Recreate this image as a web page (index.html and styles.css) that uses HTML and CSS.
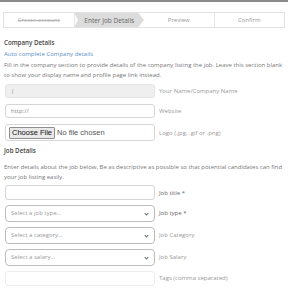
FILE: index.html
```html
<!DOCTYPE html>
<html lang="en">
<head>
  <meta charset="UTF-8" />
  <title>Submit Job</title>
  <link rel="stylesheet" href="styles.css">
</head>
<body>

<div class="topbar"></div>

<ul class="steps">
  <li class="step done">Create account</li>
  <li class="step active">Enter Job Details</li>
  <li class="step">Preview</li>
  <li class="step">Confirm</li>
</ul>

<div class="section company">
  <h3>Company Details</h3>
  <a class="auto-link" href="#">Auto complete Company details</a>
  <p class="hint">Fill in the company section to provide details of the company listing the job. Leave this section blank to show your display name and profile page link instead.</p>

  <div class="row">
    <input type="text" class="field disabled" value="|">
    <label>Your Name/Company Name</label>
  </div>
  <div class="row">
    <input type="text" class="field" value="http://">
    <label>Website</label>
  </div>
  <div class="row">
    <div class="field file-field">
      <span class="file-btn">Choose File</span>
      <span class="file-none">No file chosen</span>
    </div>
    <label>Logo (.jpg, .gif or .png)</label>
  </div>
</div>

<div class="section job">
  <h3>Job Details</h3>
  <p class="hint">Enter details about the job below. Be as descriptive as possible so that potential candidates can find your job listing easily.</p>

  <div class="row">
    <input type="text" class="field">
    <label class="req">Job title *</label>
  </div>
  <div class="row">
    <div class="field select">Select a job type...</div>
    <label class="req">Job type *</label>
  </div>
  <div class="row">
    <div class="field select">Select a category...</div>
    <label>Job Category</label>
  </div>
  <div class="row">
    <div class="field select">Select a salary...</div>
    <label>Job Salary</label>
  </div>
  <div class="row">
    <input type="text" class="field faint">
    <label>Tags (comma separated)</label>
  </div>
</div>

</body>
</html>
```

FILE: styles.css
```css
* {
  box-sizing: border-box;
  margin: 0;
  padding: 0;
}

body {
  font-family: 'Open Sans', 'DejaVu Sans', sans-serif;
  font-size: 6px;
  color: #666;
  background: #fff;
  overflow: hidden;
}

.topbar {
  height: 2px;
  background: #8a8a8a;
}

.steps {
  list-style: none;
  display: flex;
  margin: 10px 3px 0;
  border: 1px solid #e2e2e2;
  height: 16px;
}

.step {
  flex: 1;
  display: flex;
  align-items: center;
  justify-content: center;
  color: #999;
  border-right: 1px solid #e6e6e6;
}

.step:last-child {
  border-right: none;
}

.step.done {
  color: #b5b5b5;
  text-decoration: line-through;
}

.step.active {
  background: #dcdcdc;
  color: #666;
  font-size: 6.5px;
  clip-path: polygon(0 0, 92% 0, 100% 50%, 92% 100%, 0 100%, 5% 50%);
  border-right: none;
}

.section {
  padding: 0 4px;
}

h3 {
  font-size: 6.2px;
  font-weight: 600;
  color: #444;
  line-height: 8px;
}

.company h3 {
  margin-top: 11px;
}

.job h3 {
  margin-top: 3px;
}

.auto-link {
  display: block;
  color: #5b8fc7;
  text-decoration: none;
  line-height: 10px;
  margin-top: 2px;
}

.hint {
  line-height: 10px;
  color: #777;
  margin: 1px 0 4px;
}

.job .hint {
  margin: 7px 0 3px;
}

.row {
  display: flex;
  align-items: center;
  gap: 4px;
  margin-bottom: 6px;
}

.job .row {
  margin-bottom: 4.5px;
}

.field {
  width: 150px;
  height: 14px;
  margin-left: 1px;
  border: 1px solid #d6d6d6;
  border-radius: 3px;
  background: #fff;
  font-family: inherit;
  font-size: 6px;
  color: #888;
  padding: 0 5px;
  display: flex;
  align-items: center;
}

.job .field {
  height: 15px;
}

.field.disabled {
  background: #efefef;
  border-color: #e4e4e4;
}

.field.faint {
  border-color: #ececec;
}

.file-field {
  height: 17px;
  padding: 0 3px;
  font-family: 'Liberation Sans', Arial, sans-serif;
  font-size: 7.5px;
  color: #333;
  gap: 2px;
}

.file-btn {
  background: #e9e9e9;
  border: 1px solid #8f8f8f;
  border-radius: 1px;
  padding: 0 2px;
  line-height: 10px;
  color: #111;
}

.file-none {
  color: #555;
}

.job .select {
  position: relative;
  height: 17.5px;
  border-color: #bcbcbc;
  border-radius: 4px;
  color: #999;
}

.select::after {
  content: '';
  position: absolute;
  right: 6px;
  top: 6px;
  width: 2px;
  height: 2px;
  border-right: 1px solid #666;
  border-bottom: 1px solid #666;
  transform: rotate(45deg);
}

label {
  color: #999;
}

label.req {
  color: #666;
}
```
